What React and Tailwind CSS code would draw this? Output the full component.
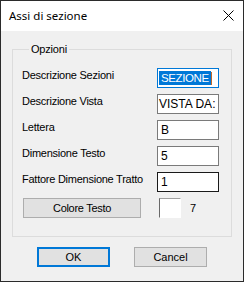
import React from 'react'

const rows = [
  { label: 'Descrizione Sezioni', value: 'SEZIONE', focused: true },
  { label: 'Descrizione Vista', value: 'VISTA DA:', scrolled: true },
  { label: 'Lettera', value: 'B' },
  { label: 'Dimensione Testo', value: '5' },
  { label: 'Fattore Dimensione Tratto', value: '1', hover: true },
]

function Field({ row }) {
  if (row.focused) {
    return (
      <div className="flex h-[20px] w-[62px] items-center overflow-hidden whitespace-nowrap border border-[#0078d7] bg-white pl-[1px]">
        <span className="bg-[#0078d7] px-[2px] text-[11.5px] leading-[14px] tracking-[-0.4px] text-white">{row.value}</span>
        <span className="h-[13px] w-[1px] bg-[#c0682a]" />
      </div>
    )
  }
  return (
    <div
      className={[
        'flex h-[20px] w-[62px] items-center overflow-hidden whitespace-nowrap border bg-white text-[12px] text-black',
        row.hover ? 'border-[#1a1a1a]' : 'border-[#7a7a7a]',
        row.scrolled ? 'pl-[1px]' : 'pl-[3px]',
      ].join(' ')}
    >
      {row.value}
    </div>
  )
}

export default function App() {
  return (
    <div className="flex h-[282px] w-[244px] flex-col border border-[#2b2b2b] bg-[#f0f0f0] font-['Liberation_Sans',Arial,sans-serif] text-black">
      <div className="flex h-[30px] shrink-0 items-center justify-between bg-white pl-[8px] pr-[9px]">
        <span className="font-['Noto_Sans',sans-serif] text-[11.5px]">Assi di sezione</span>
        <svg width="11" height="11" viewBox="0 0 11 11" className="mb-[1px]">
          <path d="M0.5 0.5 L10.5 10.5 M10.5 0.5 L0.5 10.5" stroke="#000" strokeWidth="1" />
        </svg>
      </div>

      <div className="flex flex-1 flex-col px-[11px] pt-[12px]">
        <fieldset className="m-0 border border-[#dcdcdc] pb-[18px] pl-[9px]">
          <legend className="ml-[7px] px-[2px] text-[11px] leading-[13px] tracking-[-0.2px]">Opzioni</legend>

          <div className="grid grid-cols-[135px_62px] items-start gap-y-[6px] pt-[12px]">
            {rows.map((row) => (
              <React.Fragment key={row.label}>
                <span className="pt-[1px] text-[11px] leading-[13px] tracking-[-0.25px] whitespace-nowrap">{row.label}</span>
                <Field row={row} />
              </React.Fragment>
            ))}
          </div>

          <div className="mt-[6px] flex items-center">
            <div className="ml-[1px] flex h-[20px] w-[118px] items-center justify-center border border-[#adadad] bg-[#e1e1e1] text-[11px] tracking-[-0.3px]">
              Colore Testo
            </div>
            <div className="ml-[18px] h-[20px] w-[22px] border-t border-l border-t-[#a0a0a0] border-l-[#696969] border-r border-b border-r-white border-b-white bg-white" />
            <span className="ml-[9px] text-[11px]">7</span>
          </div>
        </fieldset>

        <div className="mt-[10px] flex justify-center gap-[24px]">
          <div className="flex h-[20px] w-[73px] items-center justify-center border-2 border-[#0078d7] bg-[#e1e1e1] text-[11px]">
            OK
          </div>
          <div className="flex h-[20px] w-[73px] items-center justify-center border border-[#adadad] bg-[#e1e1e1] text-[11px]">
            Cancel
          </div>
        </div>
      </div>
    </div>
  )
}
